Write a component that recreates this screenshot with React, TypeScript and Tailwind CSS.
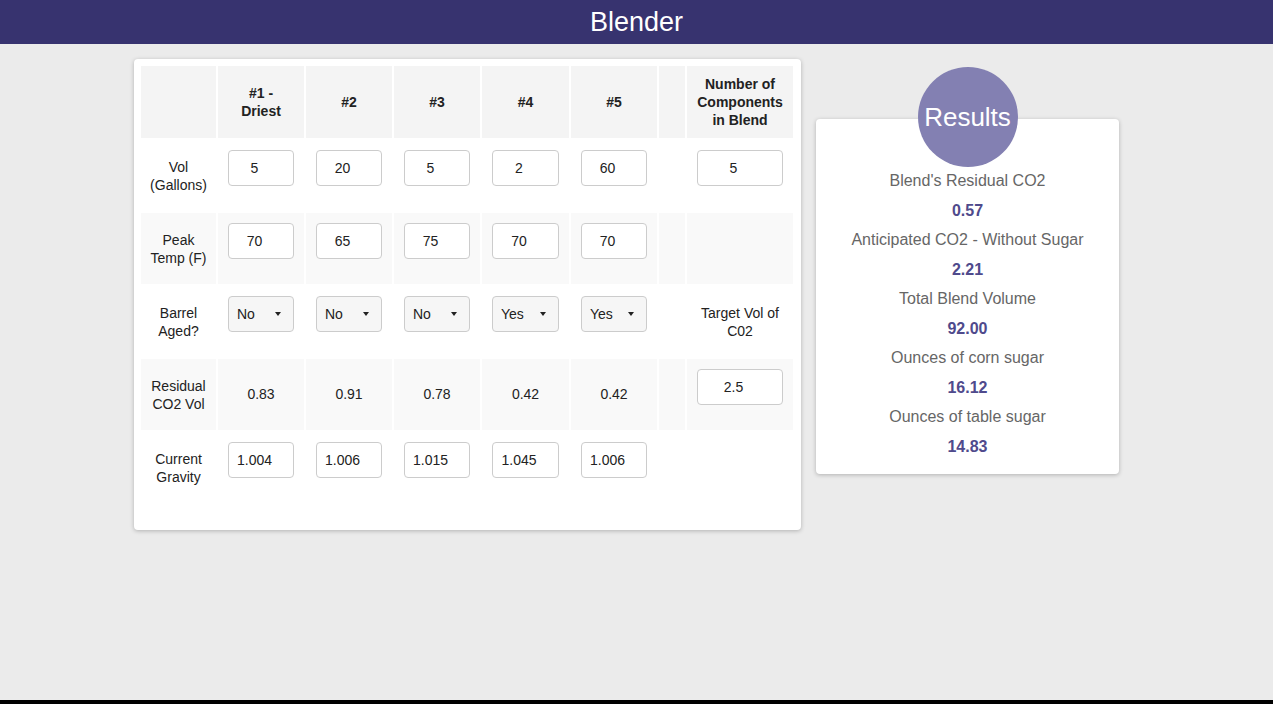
import React from "react";

const font = { fontFamily: '"Liberation Sans", Arial, Helvetica, sans-serif' };

type Cell =
  | { kind: "input"; value: string }
  | { kind: "select"; value: string }
  | { kind: "text"; value: string }
  | { kind: "empty" };

const rows: { label: string[]; cells: Cell[]; extra: Cell; gray?: boolean }[] = [
  {
    label: ["Vol", "(Gallons)"],
    cells: ["5", "20", "5", "2", "60"].map((v) => ({ kind: "input", value: v })),
    extra: { kind: "input", value: "5" },
  },
  {
    label: ["Peak", "Temp (F)"],
    cells: ["70", "65", "75", "70", "70"].map((v) => ({ kind: "input", value: v })),
    extra: { kind: "empty" },
    gray: true,
  },
  {
    label: ["Barrel", "Aged?"],
    cells: ["No", "No", "No", "Yes", "Yes"].map((v) => ({ kind: "select", value: v })),
    extra: { kind: "text", value: "Target Vol of C02" },
  },
  {
    label: ["Residual", "CO2 Vol"],
    cells: ["0.83", "0.91", "0.78", "0.42", "0.42"].map((v) => ({ kind: "text", value: v })),
    extra: { kind: "input", value: "2.5" },
    gray: true,
  },
  {
    label: ["Current", "Gravity"],
    cells: ["1.004", "1.006", "1.015", "1.045", "1.006"].map((v) => ({ kind: "input", value: v })),
    extra: { kind: "empty" },
  },
];

const results = [
  ["Blend's Residual CO2", "0.57"],
  ["Anticipated CO2 - Without Sugar", "2.21"],
  ["Total Blend Volume", "92.00"],
  ["Ounces of corn sugar", "16.12"],
  ["Ounces of table sugar", "14.83"],
];

function CellContent({ cell }: { cell: Cell }) {
  if (cell.kind === "input") {
    return (
      <div className="mb-[15px] flex h-[36px] w-full items-center justify-center rounded-[4px] border border-[#cccccc] bg-white pr-[13px] text-[14px] text-[#222]">
        {cell.value}
      </div>
    );
  }
  if (cell.kind === "select") {
    return (
      <div className="mb-[15px] flex h-[36px] w-full items-center justify-between rounded-[4px] border border-[#cccccc] bg-[#f6f6f6] pl-[8px] pr-[12px] text-[14px] text-[#222]">
        <span>{cell.value}</span>
        <span className="h-0 w-0 border-x-[3px] border-t-[4px] border-x-transparent border-t-[#222]" />
      </div>
    );
  }
  if (cell.kind === "text") {
    return <span className="text-[14px] leading-[18px] text-[#222]">{cell.value}</span>;
  }
  return null;
}

export default function App() {
  return (
    <div className="flex h-[704px] flex-col overflow-hidden bg-[#ebebeb]" style={font}>
      <header className="flex h-[44px] items-center justify-center bg-[#37336f]">
        <h1 className="text-[27px] leading-none text-white">Blender</h1>
      </header>

      <main className="flex flex-1 items-start gap-[15px] pl-[134px] pt-[15px]">
        {/* Input table card */}
        <section className="w-[667px] rounded-[4px] bg-white px-[5px] pb-[25px] pt-[5px] shadow-[0_1px_4px_rgba(0,0,0,0.25)]">
          <table className="border-separate border-spacing-[2px] text-center text-[14px] text-[#222]">
            <colgroup>
              <col className="w-[75px]" />
              <col className="w-[86px]" />
              <col className="w-[86px]" />
              <col className="w-[86px]" />
              <col className="w-[87px]" />
              <col className="w-[86px]" />
              <col className="w-[26px]" />
              <col className="w-[106px]" />
            </colgroup>
            <thead>
              <tr className="h-[72px] bg-[#f4f4f4] font-bold leading-[18px]">
                <th className="p-0" />
                <th className="px-[10px]">#1 -<br />Driest</th>
                <th>#2</th>
                <th>#3</th>
                <th>#4</th>
                <th>#5</th>
                <th />
                <th className="px-[8px]">Number of Components in Blend</th>
              </tr>
            </thead>
            <tbody>
              {rows.map((row, i) => (
                <tr key={i} className={row.gray ? "bg-[#f9f9f9]" : "bg-white"}>
                  <td className="h-[71px] p-0 align-middle leading-[18px]">
                    {row.label[0]}
                    <br />
                    {row.label[1]}
                  </td>
                  {row.cells.map((c, j) => (
                    <td key={j} className="px-[10px] pt-[10px] pb-[10px] align-middle">
                      <CellContent cell={c} />
                    </td>
                  ))}
                  <td />
                  <td className="px-[10px] pt-[10px] pb-[10px] align-middle">
                    {row.extra.kind === "text" ? (
                      <span className="block px-[2px] leading-[18px]">{row.extra.value}</span>
                    ) : (
                      <CellContent cell={row.extra} />
                    )}
                  </td>
                </tr>
              ))}
            </tbody>
          </table>
        </section>

        {/* Results card */}
        <section className="mt-[60px] flex w-[303px] flex-col items-center rounded-[4px] bg-white pb-[17px] shadow-[0_1px_4px_rgba(0,0,0,0.25)]">
          <div className="-mt-[52px] flex h-[100px] w-[100px] items-center justify-center rounded-full bg-[#8380b2]">
            <span className="text-[26px] leading-none text-white">Results</span>
          </div>
          <div className="mt-[4px] flex flex-col items-center gap-[9.5px] text-[16px] leading-[20px]">
            {results.map(([label, value]) => (
              <React.Fragment key={label}>
                <p className="text-[#666666]">{label}</p>
                <p className="font-bold text-[#4f4a8c]">{value}</p>
              </React.Fragment>
            ))}
          </div>
        </section>
      </main>

      <div className="h-[4px] bg-black" />
    </div>
  );
}
